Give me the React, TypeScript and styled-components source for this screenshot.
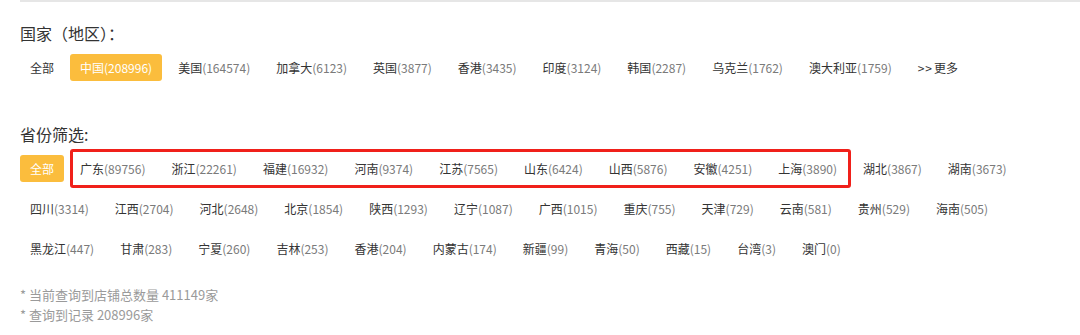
import React from "react";
import styled, { createGlobalStyle } from "styled-components";

const GlobalStyle = createGlobalStyle`
  html, body {
    margin: 0;
    padding: 0;
    background: #fff;
  }
  body {
    font-family: "Noto Sans CJK SC", "Noto Sans", sans-serif;
    color: #333;
  }
`;

const Page = styled.div`
  padding-left: 20px;
`;

const Panel = styled.div`
  border-top: 2px solid #e6e6e6;
  padding-top: 21px;
`;

const Title = styled.div<{ $first?: boolean }>`
  font-size: 16px;
  line-height: 20px;
  color: #333;
  margin: ${(p) => (p.$first ? "0" : "37px")} 0 4px;
`;

const Row = styled.div`
  display: flex;
  flex-wrap: wrap;
  align-items: center;
  column-gap: 6px;
  padding-right: 20px;
`;

const Group = styled.div`
  position: relative;
  display: flex;
  align-items: center;
  column-gap: 6px;

  &::after {
    content: "";
    position: absolute;
    top: 1px;
    bottom: 0;
    left: 0;
    right: -4px;
    border: 3px solid #f0201a;
    border-radius: 3px;
    pointer-events: none;
  }
`;

const Tag = styled.span<{ $active?: boolean }>`
  display: inline-flex;
  align-items: center;
  height: 27px;
  margin: 6.5px 0;
  padding: 0 10px;
  border-radius: 3px;
  font-size: 12px;
  white-space: nowrap;
  cursor: pointer;
  color: ${(p) => (p.$active ? "#fff" : "#333")};
  background: ${(p) => (p.$active ? "#fbbd3d" : "transparent")};
`;

const Count = styled.span<{ $active?: boolean }>`
  color: ${(p) => (p.$active ? "#fff" : "#7a7a7a")};
`;

const More = styled.span`
  letter-spacing: 1px;
  margin-right: 1px;
`;

const Footer = styled.div`
  margin-top: 17px;
  font-size: 13px;
  line-height: 20px;
  color: #9a9a9a;
`;

type Item = { name: string; count?: number };

const countries: Item[] = [
  { name: "美国", count: 164574 },
  { name: "加拿大", count: 6123 },
  { name: "英国", count: 3877 },
  { name: "香港", count: 3435 },
  { name: "印度", count: 3124 },
  { name: "韩国", count: 2287 },
  { name: "乌克兰", count: 1762 },
  { name: "澳大利亚", count: 1759 },
];

const marked: Item[] = [
  { name: "广东", count: 89756 },
  { name: "浙江", count: 22261 },
  { name: "福建", count: 16932 },
  { name: "河南", count: 9374 },
  { name: "江苏", count: 7565 },
  { name: "山东", count: 6424 },
  { name: "山西", count: 5876 },
  { name: "安徽", count: 4251 },
  { name: "上海", count: 3890 },
];

const provinces: Item[] = [
  { name: "湖北", count: 3867 },
  { name: "湖南", count: 3673 },
  { name: "四川", count: 3314 },
  { name: "江西", count: 2704 },
  { name: "河北", count: 2648 },
  { name: "北京", count: 1854 },
  { name: "陕西", count: 1293 },
  { name: "辽宁", count: 1087 },
  { name: "广西", count: 1015 },
  { name: "重庆", count: 755 },
  { name: "天津", count: 729 },
  { name: "云南", count: 581 },
  { name: "贵州", count: 529 },
  { name: "海南", count: 505 },
  { name: "黑龙江", count: 447 },
  { name: "甘肃", count: 283 },
  { name: "宁夏", count: 260 },
  { name: "吉林", count: 253 },
  { name: "香港", count: 204 },
  { name: "内蒙古", count: 174 },
  { name: "新疆", count: 99 },
  { name: "青海", count: 50 },
  { name: "西藏", count: 15 },
  { name: "台湾", count: 3 },
  { name: "澳门", count: 0 },
];

function FilterTag({ item, active }: { item: Item; active?: boolean }) {
  return (
    <Tag $active={active}>
      {item.name}
      {item.count !== undefined && <Count $active={active}>({item.count})</Count>}
    </Tag>
  );
}

export default function App() {
  return (
    <Page>
      <GlobalStyle />
      <Panel>
        <Title $first>国家（地区）：</Title>
        <Row>
          <FilterTag item={{ name: "全部" }} />
          <FilterTag item={{ name: "中国", count: 208996 }} active />
          {countries.map((c) => (
            <FilterTag key={c.name} item={c} />
          ))}
          <Tag>
            <More>&gt;&gt;</More>更多
          </Tag>
        </Row>

        <Title>省份筛选:</Title>
        <Row>
          <FilterTag item={{ name: "全部" }} active />
          <Group>
            {marked.map((p) => (
              <FilterTag key={p.name} item={p} />
            ))}
          </Group>
          {provinces.map((p, i) => (
            <FilterTag key={p.name + i} item={p} />
          ))}
        </Row>

        <Footer>
          <div>* 当前查询到店铺总数量 411149家</div>
          <div>* 查询到记录 208996家</div>
        </Footer>
      </Panel>
    </Page>
  );
}
